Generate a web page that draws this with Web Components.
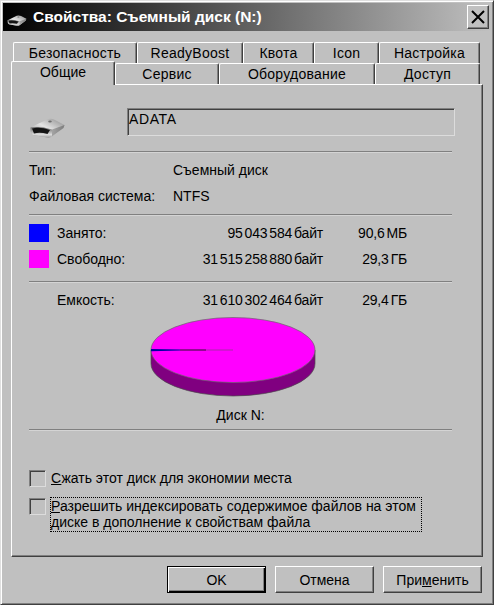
<!DOCTYPE html>
<html lang="ru">
<head>
<meta charset="utf-8">
<title>Свойства</title>
<style>
html, body { margin: 0; padding: 0; background: #c0c0c0; }
body { font: 14px "Liberation Sans", Arial, sans-serif; color: #000; }
</style>
</head>
<body>
<prop-window>
  <title-bar slot="title" caption="Свойства: Съемный диск (N:)"></title-bar>
  <tab-strip slot="tabs"></tab-strip>
  <general-page slot="page"></general-page>
  <win-button slot="buttons" default style="width:99px">OK</win-button>
  <win-button slot="buttons" style="width:99px">Отмена</win-button>
  <win-button slot="buttons" style="width:99px">При<u>м</u>енить</win-button>
</prop-window>

<script>
class DriveIcon extends HTMLElement {
    constructor() {
        super();
        this.shadowDOM = this.attachShadow({ mode: 'open' });
    }
    connectedCallback() {
        const w = this.getAttribute('width') || 35;
        const h = Math.round(w * 20 / 35);
        this.shadowDOM.innerHTML = `
        <style>:host { display: block; line-height: 0; }</style>
        <svg width="${w}" height="${h}" viewBox="0 0 35 20">
          <defs>
            <linearGradient id="top" x1="0" y1="1" x2="1" y2="0">
              <stop offset="0" stop-color="#858585"/><stop offset=".5" stop-color="#e4e4e4"/><stop offset="1" stop-color="#8a8a8a"/>
            </linearGradient>
            <linearGradient id="front" x1="0" y1="0" x2="0" y2="1">
              <stop offset="0" stop-color="#666"/><stop offset=".72" stop-color="#dcdcdc"/><stop offset="1" stop-color="#9c9c9c"/>
            </linearGradient>
            <linearGradient id="side" x1="0" y1="0" x2="1" y2="0">
              <stop offset="0" stop-color="#a4a4a4"/><stop offset="1" stop-color="#7c7c7c"/>
            </linearGradient>
          </defs>
          <path d="M0.5 9.5 L17 1.5 Q21 0 25 2 L34.5 7 L33.5 10 L22 18.5 Q20 20 17 19.5 L3 17 Q0 15.5 0.5 9.5Z" fill="url(#top)"/>
          <path d="M0.5 9.5 Q10 8 22 11.5 L22 18.5 Q20 20 17 19.5 L3 17 Q0 15.5 0.5 9.5Z" fill="url(#front)"/>
          <path d="M22 11.5 L34.5 7 L33.5 10 L22 18.5Z" fill="url(#side)"/>
          <path d="M2 10.5 Q10 8.5 20 12 L17.5 16 Q10 14 4 15.5 Z" fill="#141414"/>
          <ellipse cx="20" cy="3.5" rx="1.8" ry="1" fill="#6e6e6e"/>
        </svg>`;
    }
}

class TitleBar extends HTMLElement {
    constructor() {
        super();
        this.shadowDOM = this.attachShadow({ mode: 'open' });
    }
    connectedCallback() {
        this.shadowDOM.innerHTML = `
        <style>
            :host {
                display: flex;
                align-items: center;
                height: 28px;
                background: linear-gradient(90deg, #000 0%, #c0c0c0 100%);
                color: #fff;
                font: bold 15.5px "Liberation Sans", Arial, sans-serif;
                white-space: nowrap;
            }
            drive-icon { margin: 6px 6px 0 4px; }
            .caption { flex: 1; }
            .close {
                width: 20px;
                height: 22px;
                margin-right: 2px;
                background: #c0c0c0;
                border: 1px solid;
                border-color: #fff #404040 #404040 #fff;
                box-shadow: inset -1px -1px 0 #808080;
                display: flex;
                align-items: center;
                justify-content: center;
            }
        </style>
        <drive-icon width="20"></drive-icon>
        <span class="caption">${this.getAttribute('caption')}</span>
        <div class="close">
          <svg width="14" height="14" viewBox="0 0 14 14"><path d="M1 1L13 13M13 1L1 13" stroke="#000" stroke-width="2" fill="none"/></svg>
        </div>`;
    }
}

class TabStrip extends HTMLElement {
    constructor() {
        super();
        this.shadowDOM = this.attachShadow({ mode: 'open' });
    }
    connectedCallback() {
        const row = (items) => items.map(([name, w, active]) =>
            `<div class="tab${active ? ' active' : ''}" style="width:${w}px">${name}</div>`).join('');
        this.shadowDOM.innerHTML = `
        <style>
            :host { display: block; font-size: 14px; letter-spacing: .25px; }
            .row { display: flex; height: 21px; }
            .back { padding-left: 2px; }
            .tab {
                box-sizing: border-box;
                height: 21px;
                padding-top: 2px;
                text-align: center;
                background: #c0c0c0;
                border: 1px solid;
                border-color: #fff #404040 transparent #fff;
                border-bottom: 0;
                border-radius: 2px 2px 0 0;
                box-shadow: inset -1px 0 0 #808080;
                white-space: nowrap;
            }
            .front .tab { height: 22px; border-bottom: 1px solid #fff; padding-top: 2px; }
            .front .tab.active {
                position: relative;
                height: 24px;
                margin-top: -2px;
                padding-top: 2px;
                border-bottom: 0;
                letter-spacing: 0;
                z-index: 1;
            }
        </style>
        <div class="row back">${row([['Безопасность', 124], ['ReadyBoost', 106], ['Квота', 71], ['Icon', 65], ['Настройка', 101]])}</div>
        <div class="row front">${row([['Общие', 104, true], ['Сервис', 104], ['Оборудование', 156], ['Доступ', 105]])}</div>`;
    }
}

class EtchedRule extends HTMLElement {
    constructor() {
        super();
        this.attachShadow({ mode: 'open' }).innerHTML = `
        <style>:host { display: block; height: 2px; background: #808080; box-shadow: inset 0 -1px 0 #d4d4d4; }</style>`;
    }
}

class UsageRow extends HTMLElement {
    constructor() {
        super();
        this.shadowDOM = this.attachShadow({ mode: 'open' });
    }
    connectedCallback() {
        const color = this.getAttribute('color');
        this.shadowDOM.innerHTML = `
        <style>
            :host {
                display: grid;
                grid-template-columns: 20px 8px 100px 166px 84px;
                align-items: center;
                height: 18px;
                white-space: nowrap;
            }
            .swatch { height: 18px; }
            .num { text-align: right; letter-spacing: -.2px; word-spacing: -1.7px; }
        </style>
        <div class="swatch" style="background:${color || 'transparent'}"></div>
        <div></div>
        <div>${this.getAttribute('label')}</div>
        <div class="num">${this.getAttribute('bytes')}</div>
        <div class="num">${this.getAttribute('size')}</div>`;
    }
}

class PieChart extends HTMLElement {
    constructor() {
        super();
        this.attachShadow({ mode: 'open' }).innerHTML = `
        <style>:host { display: block; line-height: 0; }</style>
        <svg width="166" height="80" viewBox="0 0 166 80">
          <path d="M1 33 L1 46.5 A82 32.5 0 0 0 165 46.5 L165 33 Z" fill="#800080" stroke="#4a4a4a" stroke-width=".7"/>
          <ellipse cx="83" cy="33" rx="82" ry="32.5" fill="#ff00ff" stroke="#6a6a6a" stroke-width=".7"/>
          <path d="M1 32 L30 32.6 L30 33.6 L1 34.2 Z" fill="#0000a0"/>
          <path d="M30 33 L56 33" stroke="#101010" stroke-width=".9"/>
          <path d="M56 33 L83 33" stroke="#505050" stroke-width=".5"/>
        </svg>`;
    }
}

class WinCheck extends HTMLElement {
    constructor() {
        super();
        this.attachShadow({ mode: 'open' }).innerHTML = `
        <style>
            :host { display: flex; align-items: flex-start; gap: 4px; line-height: 16px; }
            .box {
                box-sizing: border-box;
                flex: none;
                width: 17px;
                height: 17px;
                border: 1px solid;
                border-color: #808080 #dcdcdc #dcdcdc #808080;
                box-shadow: inset 1px 1px 0 #404040;
            }
            .label { box-sizing: border-box; border: 1px solid transparent; margin-top: -1px; }
            :host([focused]) .label { flex: 1; padding-bottom: 1px; border: 1px dotted #000; }
            ::slotted(div) { white-space: nowrap; }
        </style>
        <div class="box"></div>
        <div class="label"><slot></slot></div>`;
    }
}

class WinButton extends HTMLElement {
    constructor() {
        super();
        this.attachShadow({ mode: 'open' }).innerHTML = `
        <style>
            :host {
                box-sizing: border-box;
                display: flex;
                align-items: center;
                justify-content: center;
                height: 27px;
                background: #c0c0c0;
                border: 1px solid;
                border-color: #fff #404040 #404040 #fff;
                box-shadow: inset -1px -1px 0 #808080;
            }
            :host([default]) {
                border: 1px solid #000;
                box-shadow: inset 1px 1px 0 #fff, inset -1px -1px 0 #000, inset -2px -2px 0 #808080;
            }
        </style>
        <slot></slot>`;
    }
}

class GeneralPage extends HTMLElement {
    constructor() {
        super();
        this.shadowDOM = this.attachShadow({ mode: 'open' });
    }
    connectedCallback() {
        this.shadowDOM.innerHTML = `
        <style>
            :host { display: block; height: 100%; box-sizing: border-box; padding: 0 29px 0 17px; }
            .name { display: flex; height: 27px; margin-top: 23px; }
            .name drive-icon { margin: 10px 0 0 1px; }
            .field {
                box-sizing: border-box;
                flex: none;
                width: 328px;
                height: 28px;
                margin-left: 62px;
                padding: 2px 1px 0;
                letter-spacing: .6px;
                border: 1px solid;
                border-color: #808080 #dcdcdc #dcdcdc #808080;
                box-shadow: inset 1px 1px 0 #404040;
            }
            etched-rule { width: 423px; }
            .rule-a { margin-top: 16px; }
            .info { display: grid; grid-template-columns: 144px 1fr; row-gap: 10px; margin-top: 9px; line-height: 16px; }
            .rule-b { margin-top: 10px; }
            usage-row { width: 378px; }
            .used { margin-top: 8px; }
            .free { margin-top: 8px; }
            .rule-c { margin-top: 13px; }
            .cap { margin-top: 8px; }
            pie-chart { width: 166px; margin: 8px 0 0 121px; }
            .disk { width: 423px; text-align: center; margin-top: 10px; line-height: 16px; }
            .rule-d { margin-top: 6px; }
            .c1 { margin-top: 39px; }
            .c2 { margin-top: 11px; width: 393px; }
        </style>
        <div class="name">
          <drive-icon width="35"></drive-icon>
          <div class="field">ADATA</div>
        </div>
        <etched-rule class="rule-a"></etched-rule>
        <div class="info">
          <div>Тип:</div><div>Съемный диск</div>
          <div>Файловая система:</div><div>NTFS</div>
        </div>
        <etched-rule class="rule-b"></etched-rule>
        <usage-row class="used" color="#0000ff" label="Занято:" bytes="95 043 584 байт" size="90,6 МБ"></usage-row>
        <usage-row class="free" color="#ff00ff" label="Свободно:" bytes="31 515 258 880 байт" size="29,3 ГБ"></usage-row>
        <etched-rule class="rule-c"></etched-rule>
        <usage-row class="cap" label="Емкость:" bytes="31 610 302 464 байт" size="29,4 ГБ"></usage-row>
        <pie-chart></pie-chart>
        <div class="disk">Диск N:</div>
        <etched-rule class="rule-d"></etched-rule>
        <win-check class="c1"><u>С</u>жать этот диск для экономии места</win-check>
        <win-check class="c2" focused><div><u>Р</u>азрешить индексировать содержимое файлов на этом</div><div>диске в дополнение к свойствам файла</div></win-check>`;
    }
}

class PropWindow extends HTMLElement {
    constructor() {
        super();
        this.attachShadow({ mode: 'open' }).innerHTML = `
        <style>
            :host {
                box-sizing: border-box;
                display: flex;
                flex-direction: column;
                width: 494px;
                height: 605px;
                padding: 2px;
                background: #c0c0c0;
                border: 1px solid;
                border-color: #dfdfdf #404040 #404040 #dfdfdf;
                box-shadow: inset 1px 1px 0 #fff, inset -1px -1px 0 #808080;
            }
            .tabs { display: block; margin: 11px 0 0 8px; height: 42px; }
            .panel {
                box-sizing: border-box;
                height: 473px;
                width: 472px;
                margin-left: 8px;
                border: 1px solid;
                border-color: #fff #404040 #404040 #fff;
                box-shadow: inset -1px -1px 0 #808080;
            }
            .buttons { display: flex; justify-content: flex-end; gap: 9px; margin: 9px 9px 0 0; }
        </style>
        <slot name="title"></slot>
        <div class="tabs"><slot name="tabs"></slot></div>
        <div class="panel"><slot name="page"></slot></div>
        <div class="buttons"><slot name="buttons"></slot></div>`;
    }
}

customElements.define('drive-icon', DriveIcon);
customElements.define('title-bar', TitleBar);
customElements.define('tab-strip', TabStrip);
customElements.define('etched-rule', EtchedRule);
customElements.define('usage-row', UsageRow);
customElements.define('pie-chart', PieChart);
customElements.define('win-check', WinCheck);
customElements.define('win-button', WinButton);
customElements.define('general-page', GeneralPage);
customElements.define('prop-window', PropWindow);
</script>
</body>
</html>
